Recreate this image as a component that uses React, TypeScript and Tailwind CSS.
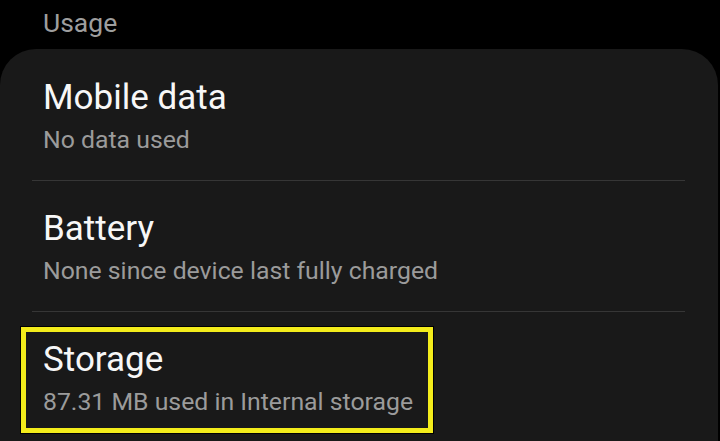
export default function App() {
  const rows = [
    { title: "Mobile data", sub: "No data used" },
    { title: "Battery", sub: "None since device last fully charged" },
    { title: "Storage", sub: "87.31 MB used in Internal storage", marked: true },
  ];

  return (
    <div className="min-h-[441px] h-[441px] overflow-hidden bg-black font-['Roboto',sans-serif] flex flex-col">
      {/* Section header */}
      <div className="pt-2 px-[43px] text-[26.5px] leading-[30px] text-[#9e9e9e]">Usage</div>

      {/* Card */}
      <div className="mt-[11px] mr-[2px] flex-1 bg-[#191919] rounded-t-[36px]">
        {rows.map((row, i) => (
          <div key={row.title}>
            {i > 0 && <div className="ml-[32px] mr-[33px] h-px bg-[#363636]" />}
            <div className={`relative px-[43px] ${i === 0 ? "pt-[29px]" : "pt-[28px]"} pb-[18px]`}>
              <div className="text-[35px] leading-[40px] text-[#f7f7f7]">{row.title}</div>
              <div className="text-[24.8px] leading-[44px] text-[#9b9b9b]">{row.sub}</div>
              {row.marked && (
                <div className="absolute left-[21px] top-[15px] w-[412px] h-[106px] border-[5px] border-[#f3ec1b] shadow-[0_0_0_1px_#000]" />
              )}
            </div>
          </div>
        ))}
      </div>
    </div>
  );
}
